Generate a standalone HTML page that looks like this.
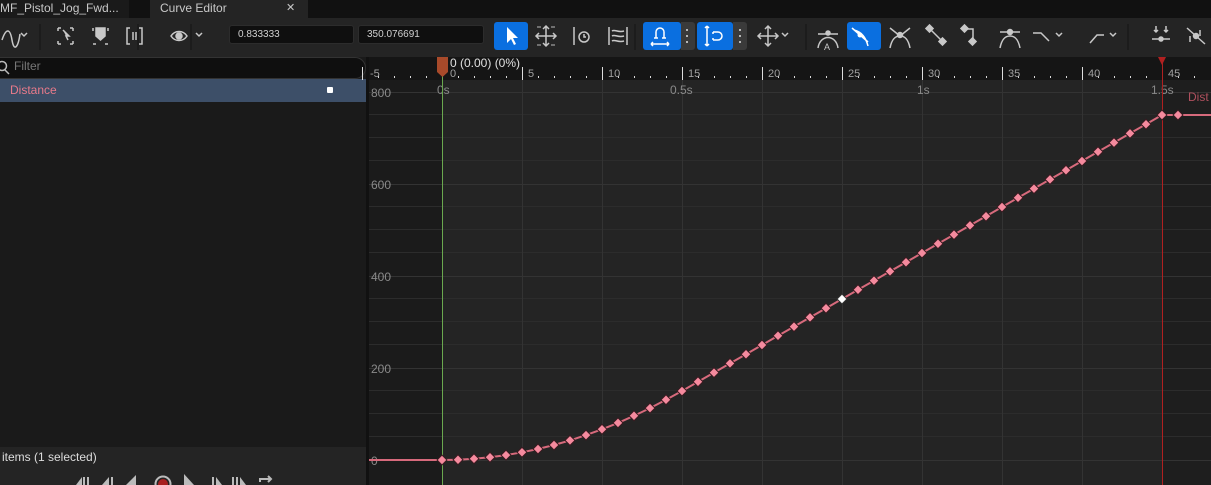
<!DOCTYPE html>
<html><head><meta charset="utf-8"><style>
*{margin:0;padding:0;box-sizing:border-box}
body{width:1211px;height:485px;overflow:hidden;background:#1a1a1a;font-family:"Liberation Sans",sans-serif;position:relative;color:#c0c0c0}
.a{position:absolute}
.tab{top:0;height:18px;font-size:12px;line-height:17px;color:#c8c8c8}
.inp{top:25px;height:19px;background:#0f0f0f;border:1px solid #2c2c2c;border-radius:3px;font-size:10px;color:#d0d0d0;line-height:17px;padding-left:8px}
.blue{background:#0a6fe0;border-radius:3px;top:22px;height:28px}
</style></head><body>
<div class="a" style="left:0;top:0;width:1211px;height:18px;background:#111"></div>
<div class="a" style="left:0;top:0;width:129px;height:18px;background:#1a1a1a"></div>
<div class="a tab" style="left:0">MF_Pistol_Jog_Fwd...</div>
<div class="a" style="left:150px;top:0;width:158px;height:18px;background:#242424"></div>
<div class="a tab" style="left:160px">Curve Editor</div>
<div class="a tab" style="left:286px;font-size:11px">✕</div>
<!-- toolbar -->
<div class="a" style="left:0;top:18px;width:1211px;height:39px;background:#242424"></div>
<div class="a inp" style="left:229px;width:125px">0.833333</div>
<div class="a inp" style="left:358px;width:126px">350.076691</div>
<div class="a blue" style="left:494px;width:34px"></div>
<div class="a blue" style="left:643px;width:38px"></div>
<div class="a" style="left:681px;top:22px;width:14px;height:28px;background:#3a3a3a;border-radius:0 3px 3px 0"></div>
<div class="a blue" style="left:697px;width:36px"></div>
<div class="a" style="left:733px;top:22px;width:14px;height:28px;background:#3a3a3a;border-radius:0 3px 3px 0"></div>
<div class="a blue" style="left:847px;width:34px"></div>
<svg class="a" style="left:0;top:18px" width="1211" height="39" fill="none" stroke="#c8c8c8" stroke-width="1.5">
<path d="M2 22c4-12 8-12 10 0s6 8 8-6"/><path d="M21 15l3 3 3-3"/>
<line x1="40" y1="6" x2="40" y2="32" stroke="#1a1a1a"/><line x1="138" y1="6" x2="138" y2="32" stroke="#1a1a1a"/><line x1="191" y1="6" x2="191" y2="32" stroke="#1a1a1a"/>
<path d="M58 10h3M58 10v3M73 10h-3M73 10v3M58 26v-3M58 26h3M73 26h-3M73 26v-3"/><path d="M63 12l6 6-3 0 2 4" fill="#c8c8c8"/>
<path d="M93 10v3M108 10v3M93 26h3M108 26h-3"/><path d="M96 10h9v8l-4.5 4-4.5-4z" fill="#c8c8c8"/>
<path d="M130 10h-3v16h3M139 10h3v16h-3"/><path d="M133 14v8M136 14v8"/>
<path d="M171 18c4-6 12-6 16 0c-4 6-12 6-16 0z"/><circle cx="179" cy="18" r="3" fill="#c8c8c8"/><path d="M196 15l3 3 3-3"/>
<path d="M507 9l0 16 4-4 3 6 2-1-3-6 5 0z" fill="#fff" stroke="none"/>
<path d="M546 8v20M536 18h20M543 11l3-3 3 3M543 25l3 3 3-3M539 15l-3 3 3 3M553 15l3 3-3 3"/><path d="M537 9h4M537 27h4M551 9h4M551 27h4" stroke="#888"/>
<path d="M574 9v18"/><circle cx="584" cy="19" r="5"/><path d="M584 16v3h2"/>
<path d="M609 9v18M627 9v18M612 13c3-2 6 2 12 0M612 18c3-2 6 2 12 0M612 23c3-2 6 2 12 0"/>
<line x1="635" y1="6" x2="635" y2="32" stroke="#1a1a1a"/>
<path d="M656 20v-6a4 4 0 0 1 8 0v6M654 20h4M662 20h4M651 26h18M651 26l2-2M651 26l2 2M669 26l-2-2M669 26l-2 2" stroke="#fff"/>
<circle cx="687" cy="12" r="1" fill="#ddd" stroke="none"/><circle cx="687" cy="18" r="1" fill="#ddd" stroke="none"/><circle cx="687" cy="24" r="1" fill="#ddd" stroke="none"/>
<path d="M707 8v20M707 8l-2 2M707 8l2 2M707 28l-2-2M707 28l2-2M713 14h5a4 4 0 0 1 0 8h-5M713 14v2M713 22v-2" stroke="#fff"/>
<circle cx="740" cy="12" r="1" fill="#ddd" stroke="none"/><circle cx="740" cy="18" r="1" fill="#ddd" stroke="none"/><circle cx="740" cy="24" r="1" fill="#ddd" stroke="none"/>
<path d="M768 8v20M758 18h20M765 11l3-3 3 3M765 25l3 3 3-3M761 15l-3 3 3 3M775 15l3 3-3 3"/><path d="M782 15l3 3 3-3"/>
<line x1="806" y1="6" x2="806" y2="32" stroke="#1a1a1a"/>
<path d="M818 30c2-14 18-14 20 0M818 16h20"/><circle cx="828" cy="15" r="2" fill="#c8c8c8"/><text x="824" y="32" font-size="9" fill="#c8c8c8" stroke="none" font-family="Liberation Sans">A</text>
<path d="M854 12c8 2 12 8 14 16M852 10l16 14" stroke="#fff"/><circle cx="860" cy="17" r="2.5" fill="#fff" stroke="none"/>
<path d="M890 30c2-10 6-12 10-12s8 2 10 12M890 10l10 8 10-8"/><circle cx="900" cy="17" r="2.5" fill="#c8c8c8"/>
<path d="M930 11l12 12"/><rect x="927" y="8" width="5" height="5" transform="rotate(45 929.5 10.5)" fill="#c8c8c8"/><rect x="940" y="21" width="5" height="5" transform="rotate(45 942.5 23.5)" fill="#c8c8c8"/>
<path d="M965 11h8v12"/><rect x="962" y="8" width="5" height="5" transform="rotate(45 964.5 10.5)" fill="#c8c8c8"/><rect x="970" y="21" width="5" height="5" transform="rotate(45 972.5 23.5)" fill="#c8c8c8"/>
<path d="M1000 30c2-10 6-12 10-12s8 2 10 12M1000 14h20"/><circle cx="1010" cy="14" r="2.5" fill="#c8c8c8"/>
<path d="M1033 15h8l8 8"/><path d="M1056 15l3 3 3-3"/>
<path d="M1090 25l7-8h7"/><path d="M1110 15l3 3 3-3"/>
<line x1="1128" y1="6" x2="1128" y2="32" stroke="#1a1a1a"/>
<path d="M1152 21h18M1156 8v6M1166 8v6M1154 12l2 2 2-2M1164 12l2 2 2-2"/><circle cx="1161" cy="21" r="2" fill="#c8c8c8"/>
<path d="M1187 10l18 16M1190 24v-6M1200 12v6"/><circle cx="1196" cy="18" r="2.5" fill="#c8c8c8"/>
</svg>
<!-- left panel -->
<div class="a" style="top:57px;height:22px;background:#0f0f0f;border:1px solid #333;border-radius:11px;left:-10px;width:376px"></div>
<svg class="a" style="left:0;top:60px" width="12" height="16" fill="none" stroke="#bbb" stroke-width="1.5"><circle cx="2" cy="6" r="4.5"/><path d="M5 10l4 4"/></svg>
<div class="a" style="left:14px;top:59px;font-size:12px;color:#777">Filter</div>
<div class="a" style="left:0;top:79px;width:366px;height:23px;background:#3d4f68"></div>
<div class="a" style="left:10px;top:83px;font-size:12px;color:#e87a8a">Distance</div>
<div class="a" style="left:327px;top:87px;width:6px;height:6px;background:#fff;border-radius:1px"></div>
<div class="a" style="left:0;top:447px;width:366px;height:38px;background:#242424"></div>
<div class="a" style="left:2px;top:450px;font-size:12px;color:#ddd">items (1 selected)</div>
<svg class="a" style="left:70px;top:470px" width="210" height="15" fill="#bbb">
<path d="M6 15l6-8v8zM13 15h2v-8h-2zM17 15h2v-8h-2z"/><path d="M32 15l7-8v8zM41 15h2v-8h-2z"/><path d="M56 15l10-10v10z"/>
<circle cx="93" cy="14" r="7.5" fill="none" stroke="#bbb" stroke-width="2"/><circle cx="93" cy="14" r="5" fill="#a82020"/>
<path d="M114 4l10 11h-10z"/><path d="M142 7h2v8h-2zM146 7l6 8h-6z"/><path d="M162 7h2v8h-2zM166 7h2v8h-2zM170 7l6 8h-6z"/>
<path d="M190 12v-3h10M198 6l3 3-3 3" fill="none" stroke="#bbb" stroke-width="2"/>
</svg>
<!-- graph -->
<div class="a" style="left:366px;top:57px;width:3px;height:428px;background:#111"></div>
<div class="a" style="left:369px;top:57px;width:842px;height:23px;background:#151515"></div>
<div class="a" style="left:369px;top:80px;width:73px;height:405px;background:#1b1b1b"></div>
<div class="a" style="left:442px;top:80px;width:720px;height:405px;background:#242424"></div>
<div class="a" style="left:1162px;top:80px;width:49px;height:405px;background:#1e1e1e"></div>
<svg class="a" style="left:0;top:0" width="1211" height="485">
<defs><g id="k"><rect x="-3.5" y="-3.5" width="7" height="7" transform="rotate(45)" fill="#f58a9e" stroke="#3a1a20" stroke-width="1"/></g></defs>
<g stroke="#2c2c2c" stroke-width="1">
<path d="M369 114.5H1211M369 137.5H1211M369 160.5H1211M369 206.5H1211M369 229.5H1211M369 252.5H1211M369 298.5H1211M369 321.5H1211M369 344.5H1211M369 390.5H1211M369 413.5H1211M369 436.5H1211"/>
</g>
<g stroke="#333" stroke-width="1">
<path d="M369 92.5H1211M369 184.5H1211M369 276.5H1211M369 368.5H1211M369 460.5H1211"/>
<path d="M522.5 80V485M602.5 80V485M682.5 80V485M762.5 80V485M842.5 80V485M922.5 80V485M1002.5 80V485M1082.5 80V485"/>
</g>
<g stroke="#ddd" stroke-width="1">
<path d="M362.5 67V80M442.5 67V80M522.5 67V80M602.5 67V80M682.5 67V80M762.5 67V80M842.5 67V80M922.5 67V80M1002.5 67V80M1082.5 67V80M1162.5 67V80"/>
<path d="M378.5 76V78M394.5 76V78M410.5 76V78M426.5 76V78M458.5 76V78M474.5 76V78M490.5 76V78M506.5 76V78M538.5 76V78M554.5 76V78M570.5 76V78M586.5 76V78M618.5 76V78M634.5 76V78M650.5 76V78M666.5 76V78M698.5 76V78M714.5 76V78M730.5 76V78M746.5 76V78M778.5 76V78M794.5 76V78M810.5 76V78M826.5 76V78M858.5 76V78M874.5 76V78M890.5 76V78M906.5 76V78M938.5 76V78M954.5 76V78M970.5 76V78M986.5 76V78M1018.5 76V78M1034.5 76V78M1050.5 76V78M1066.5 76V78M1098.5 76V78M1114.5 76V78M1130.5 76V78M1146.5 76V78M1178.5 76V78M1194.5 76V78"/>
</g>
<g font-family="Liberation Sans" font-size="11" fill="#a0a0a0">
<text x="370" y="77">-5</text><text x="450" y="77">0</text><text x="528" y="77">5</text><text x="608" y="77">10</text><text x="688" y="77">15</text><text x="768" y="77">20</text><text x="848" y="77">25</text><text x="928" y="77">30</text><text x="1008" y="77">35</text><text x="1088" y="77">40</text><text x="1168" y="77">45</text>
</g>
<g font-family="Liberation Sans" font-size="12" fill="#8a8a8a">
<text x="437" y="94">0s</text><text x="670" y="94">0.5s</text><text x="917" y="94">1s</text><text x="1151" y="94">1.5s</text>
<text x="371" y="97">800</text><text x="371" y="189">600</text><text x="371" y="281">400</text><text x="371" y="373">200</text><text x="371" y="465">0</text>
</g>
<text x="1188" y="101" font-family="Liberation Sans" font-size="12" fill="#b0505e">Dist</text>
<line x1="442.5" y1="60" x2="442.5" y2="485" stroke="#6aa84f" stroke-width="1"/>
<line x1="1162.5" y1="60" x2="1162.5" y2="485" stroke="#b02020" stroke-width="1"/>
<path d="M1158 57h8l-4 8z" fill="#b02020"/>
<path d="M437 57h11v15l-5.5 5-5.5-5z" fill="#a84a2a"/>
<text x="450" y="67" font-family="Liberation Sans" font-size="12" fill="#e0e0e0">0 (0.00) (0%)</text>
<polyline fill="none" stroke="#d76a7c" stroke-width="2" points="369,460 442,460 458,459.7 474,458.8 490,457.2 506,455.1 522,452.3 538,449 554,445 570,440.4 586,435.1 602,429.3 618,422.9 634,415.8 650,408.1 666,399.8 682,391 698,381.8 714,372.6 730,363.4 746,354.2 762,345 778,335.8 794,326.6 810,317.4 826,308.2 842,299 858,289.8 874,280.6 890,271.4 906,262.2 922,253 938,243.8 954,234.6 970,225.4 986,216.2 1002,207 1018,197.8 1034,188.6 1050,179.4 1066,170.2 1082,161 1098,151.8 1114,142.6 1130,133.4 1146,124.2 1162,115 1178,115 1211,115"/>
<use href="#k" x="442" y="460"/><use href="#k" x="458" y="459.7"/><use href="#k" x="474" y="458.8"/><use href="#k" x="490" y="457.2"/><use href="#k" x="506" y="455.1"/><use href="#k" x="522" y="452.3"/><use href="#k" x="538" y="449"/><use href="#k" x="554" y="445"/><use href="#k" x="570" y="440.4"/><use href="#k" x="586" y="435.1"/><use href="#k" x="602" y="429.3"/><use href="#k" x="618" y="422.9"/><use href="#k" x="634" y="415.8"/><use href="#k" x="650" y="408.1"/><use href="#k" x="666" y="399.8"/><use href="#k" x="682" y="391"/><use href="#k" x="698" y="381.8"/><use href="#k" x="714" y="372.6"/><use href="#k" x="730" y="363.4"/><use href="#k" x="746" y="354.2"/><use href="#k" x="762" y="345"/><use href="#k" x="778" y="335.8"/><use href="#k" x="794" y="326.6"/><use href="#k" x="810" y="317.4"/><use href="#k" x="826" y="308.2"/><use href="#k" x="858" y="289.8"/><use href="#k" x="874" y="280.6"/><use href="#k" x="890" y="271.4"/><use href="#k" x="906" y="262.2"/><use href="#k" x="922" y="253"/><use href="#k" x="938" y="243.8"/><use href="#k" x="954" y="234.6"/><use href="#k" x="970" y="225.4"/><use href="#k" x="986" y="216.2"/><use href="#k" x="1002" y="207"/><use href="#k" x="1018" y="197.8"/><use href="#k" x="1034" y="188.6"/><use href="#k" x="1050" y="179.4"/><use href="#k" x="1066" y="170.2"/><use href="#k" x="1082" y="161"/><use href="#k" x="1098" y="151.8"/><use href="#k" x="1114" y="142.6"/><use href="#k" x="1130" y="133.4"/><use href="#k" x="1146" y="124.2"/><use href="#k" x="1162" y="115"/><use href="#k" x="1178" y="115"/>
<rect x="838.5" y="295.5" width="7" height="7" transform="rotate(45 842 299)" fill="#fff" stroke="#333"/>
</svg>
</body></html>
